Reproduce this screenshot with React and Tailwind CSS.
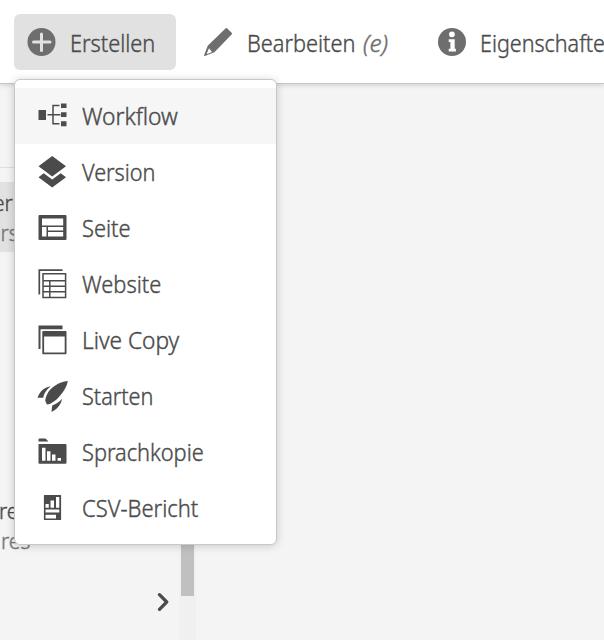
import React from "react";

const icons = {
  workflow: (
    <>
      <path d="M1 10h7.5v10H1zM23.500 3.500h5.500v4.500h-5.500zM23.500 12.200h5.500v4.800h-5.500zM23.500 21.200h5.500v5h-5.500z" />
      <path d="M10 14.800h13M22 5.500h-6.500v18.300H22" fill="none" stroke="currentColor" strokeWidth="1.500" />
    </>
  ),
  version: <path d="M14.700 0 28.500 10.300 14.700 20.600 1 10.300zM6.200 17.300l8.500 6.300 8.500-6.300 5.300 4-13.800 10.200L1 21.300z" />,
  page: (
    <path fillRule="evenodd" d="M2 3h26a1 1 0 0 1 1 1v23a1 1 0 0 1-1 1H2a1 1 0 0 1-1-1V4a1 1 0 0 1 1-1zM4.500 6.500v7h21.200v-7zM4.500 15v9.500H9V15zM10.500 15v3.500h15.200V15zM10.500 20v4.500h15.200V20z" />
  ),
  website: (
    <g fill="none" stroke="currentColor" strokeWidth="1.700">
      <path d="M1.800 26.500V2.200H25" />
      <path d="M5.500 5.800h22.600v23.700H5.500zM5.500 12.700h22.600M5.500 18.300h22.600M5.500 23.800h22.600M12.300 12.700v16.800" strokeWidth="1.500" />
    </g>
  ),
  live: (
    <>
      <path d="M1 1.500h24v3.800H3V25H1z" />
      <path fillRule="evenodd" d="M5.500 7h22.800a.7.700 0 0 1 .7.700v21.900a.7.700 0 0 1-.7.700H5.500a.7.700 0 0 1-.7-.7V7.700a.7.700 0 0 1 .7-.7zM6.600 12.500v16h20.600v-16z" />
    </>
  ),
  rocket: (
    <path d="M30.300 1C21 2 13 7.500 10 13.500c-2 4-2.800 7.500-1.500 9 .7.800.1 1.500 1.200 1.900 3.800-.2 8.800-3.600 12.800-8.600C27 10.400 29.500 6 30.300 1zM13.500 6.500C7 7 2.500 11 0 17.700h5.800c.5-4 3.200-8.400 7.700-11.200zM24.500 18.700c-2.500 3-6 5.500-9.800 6.800L14 32c6-3.200 9.800-7.700 10.500-13.300z" />
  ),
  folder: (
    <path fillRule="evenodd" d="M2 2.500h5.500c1 0 2 1.400 3.200 3H1v-2a1 1 0 0 1 1-1zM1 8h27a1 1 0 0 1 1 1v17.700a1 1 0 0 1-1 1H2a1 1 0 0 1-1-1zM4.500 11.800v12.900H8V11.800zM9.500 15.300v9.400H13v-9.400zM14.500 18.500v6.200H18v-6.200zM20 22v2.700h3.500V22z" />
  ),
  report: (
    <path fillRule="evenodd" d="M7 3h16a.6.600 0 0 1 .6.600v23.800a.6.600 0 0 1-.6.600H7a.6.600 0 0 1-.6-.6V3.600A.6.600 0 0 1 7 3zM8 12v3.700h3.300V12zM13 8.500v7.200h3.500V8.500zM18.500 5v10.700h3.300V5zM8 17.500v3h13.800v-3zM8 22.700v3.700h10.500v-3.700z" />
  ),
};

const items = [
  { label: "Workflow", icon: "workflow", scale: "scale-x-[0.990]" },
  { label: "Version", icon: "version", scale: "scale-x-[0.94]" },
  { label: "Seite", icon: "page", scale: "scale-x-[0.95]" },
  { label: "Website", icon: "website", scale: "scale-x-[0.95]" },
  { label: "Live Copy", icon: "live", scale: "scale-x-[0.985]" },
  { label: "Starten", icon: "rocket", scale: "scale-x-[0.94]" },
  { label: "Sprachkopie", icon: "folder", scale: "scale-x-[0.946]" },
  { label: "CSV-Bericht", icon: "report", scale: "scale-x-[0.955]" },
];

function Label({ children, scale }) {
  return <span className={`inline-block origin-left whitespace-nowrap ${scale}`}>{children}</span>;
}

function Toolbar() {
  return (
    <header className="relative flex h-[84px] shrink-0 items-start border-b border-[#c6c6c6] bg-white pt-3.5 pl-3.5 text-[#4b4b4b] shadow-[0_1px_5px_rgba(0,0,0,0.16)]">
      <button className="flex h-14 w-[162px] shrink-0 items-center rounded-md bg-[#e1e1e1] pl-[13px]">
        <svg className="mr-3.5 h-7 w-[29px] shrink-0 text-[#6e6e6e]" viewBox="0 0 29 28" fill="currentColor">
          <circle cx="14.500" cy="14" r="14" />
          <path d="M14.500 6v16.500M6.500 14H23" fill="none" stroke="#e1e1e1" strokeWidth="3" strokeLinecap="round" />
        </svg>
        <Label scale="scale-x-[0.945] pt-0.5">Erstellen</Label>
      </button>
      <button className="ml-7 flex h-14 w-[220px] shrink-0 items-center">
        <svg className="mr-3.5 size-7 shrink-0 text-[#6e6e6e]" viewBox="0 0 28 28" fill="currentColor">
          <path fillRule="evenodd" d="M21.500.4a1.300 1.300 0 0 1 1.800 0l4.300 4.400a1.300 1.300 0 0 1 0 1.800L10.400 24.200.8 28c-.5.200-.9-.2-.7-.7l3.600-9.500zM5 20.200 2.800 25.400l.5.500 4.700-2z" />
        </svg>
        <Label scale="w-[117px] scale-x-[0.945] pt-0.5">Bearbeiten</Label>
        <Label scale="scale-x-[1.060] pt-0.5 italic text-[#6e6e6e]">(e)</Label>
      </button>
      <button className="ml-3.5 flex h-14 shrink-0 items-center">
        <svg className="mr-3.5 size-7 shrink-0 text-[#6e6e6e]" viewBox="0 0 28 28" fill="currentColor">
          <circle cx="14" cy="14" r="14" />
          <circle cx="13.900" cy="6.300" r="2.900" fill="#fff" />
          <path d="M10.700 11.200h6v9.600h1.200v2.700h-7.200v-2.700h1.700v-6.900h-1.700z" fill="#fff" />
        </svg>
        <Label scale="scale-x-[0.935] pt-0.5">Eigenschafte</Label>
      </button>
    </header>
  );
}

function Column() {
  return (
    <div className="flex grow">
      <div className="flex w-[179px] shrink-0 flex-col overflow-hidden whitespace-nowrap text-[21px] leading-[30px] text-[#4b4b4b]">
        <div className="h-[84px] border-b border-[#dedede]" />
        <div className="mt-3.5 flex h-[70px] flex-col bg-[#e1e1e1] pt-1.5">
          <span className="-ml-[7px]">er</span>
          <span className="-ml-[11px] text-[#777]">ers</span>
        </div>
        <div className="mt-[244px] flex flex-col">
          <span className="-ml-px">re</span>
          <span className="ml-px text-[#777]">res</span>
        </div>
        <svg className="mt-9 ml-[157px] h-5 w-3 text-[#4b4b4b]" viewBox="0 0 12 20" fill="none" stroke="currentColor" strokeWidth="3.300" strokeLinecap="round" strokeLinejoin="round">
          <path d="m2.500 2.700 7.200 7.300-7.200 7.300" />
        </svg>
      </div>
      <div className="flex w-[17px] justify-center bg-[#f0f0f0]">
        <div className="h-[512px] w-[13px] bg-[#c0c0c0]" />
      </div>
    </div>
  );
}

export default function App() {
  return (
    <div className="relative flex h-[640px] w-[604px] flex-col overflow-hidden bg-[#f4f4f4] font-['Noto_Sans',sans-serif] text-[23px] leading-none font-light [-webkit-text-stroke:0.4px_currentColor]">
      <Toolbar />
      <Column />
      <nav className="absolute top-[79px] left-3.5 flex h-[466px] w-[263px] flex-col rounded-md border border-[#c8c8c8] bg-white pt-2 text-[#4b4b4b] shadow-[0_1px_8px_rgba(0,0,0,0.18)]">
        {items.map((item, i) => (
          <a key={item.label} className={`flex h-14 shrink-0 items-center pl-[22px] ${i === 0 ? "bg-[#f6f6f6]" : ""}`}>
            <svg className="mr-3.5 h-8 w-[31px] shrink-0" viewBox="-0.500 0 31 32" fill="currentColor">
              {icons[item.icon]}
            </svg>
            <Label scale={item.scale}>{item.label}</Label>
          </a>
        ))}
      </nav>
    </div>
  );
}
